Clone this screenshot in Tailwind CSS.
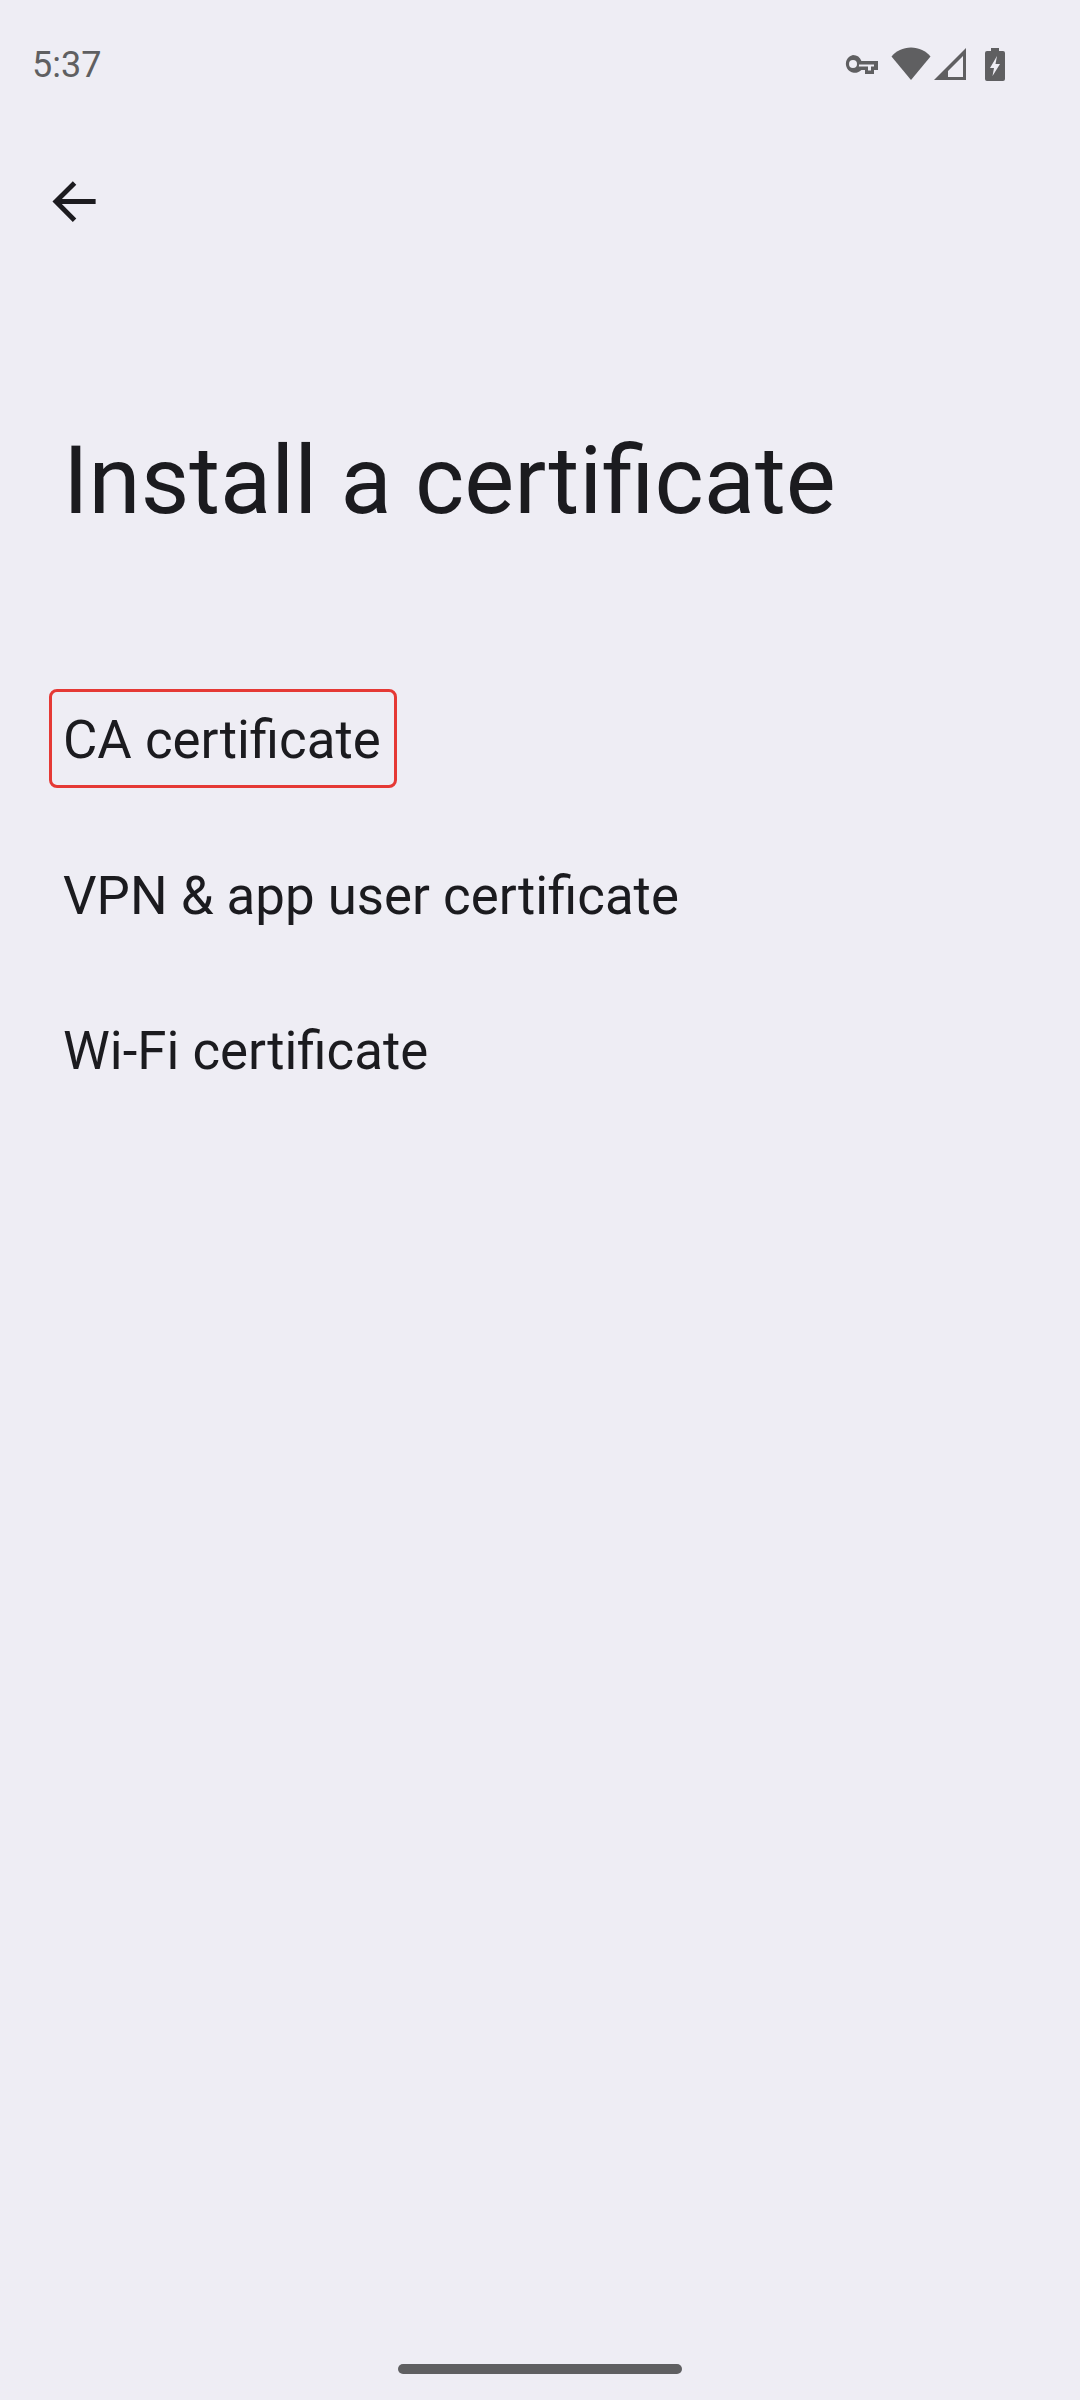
<!DOCTYPE html>
<html lang="en">
<head>
  <meta charset="UTF-8">
  <meta name="viewport" content="width=device-width, initial-scale=1.0">
  <title>Install a certificate</title>
  <script src="https://cdn.jsdelivr.net/npm/@tailwindcss/browser@4"></script>
</head>
<body class="bg-[#eeedf4] font-['Roboto',sans-serif]">
  <div class="flex flex-col w-[1080px] h-[2400px] overflow-hidden">
    <!-- Status bar -->
    <div class="flex items-center justify-between h-[64px] mt-[32px] pl-[32px] pr-[75px] text-[#5f5f61]">
      <span class="pt-[2px] text-[36px] leading-none">5:37</span>
      <div class="flex items-center">
        <svg class="w-[34px] h-[22px] fill-current" viewBox="0 0 34 22">
          <path fill-rule="evenodd" d="M9 2a9 9 0 0 1 8.400 6H34v9h-4v4h-9v-4h-3.600A9 9 0 1 1 9 2zm0 5a4 4 0 1 0 0 8 4 4 0 0 0 0-8zm6 4.500a6 6 0 0 1-.2 2H24v4h3v-4h3v-2z"/>
        </svg>
        <svg class="w-[40px] h-[34px] ml-[13px] fill-current" viewBox="0 0 40 34">
          <path d="M20 33 .5 9.500C5 4 12 .500 20 .500S35 4 39.500 9.500z"/>
        </svg>
        <svg class="w-[34px] h-[34px] ml-[2px] fill-current" viewBox="0 0 34 34">
          <path fill-rule="evenodd" d="M33 1v32H1zM30 9 15 24v6h15z"/>
        </svg>
        <svg class="w-[20px] h-[34px] ml-[18px] fill-current" viewBox="0 0 20 34">
          <path fill-rule="evenodd" d="M6 1h8v3h4a2 2 0 0 1 2 2v26a2 2 0 0 1-2 2H2a2 2 0 0 1-2-2V6a2 2 0 0 1 2-2h4zM12 9 5 21h4l-1.500 8L15 17h-4.500z"/>
        </svg>
      </div>
    </div>

    <!-- Back button -->
    <div class="flex items-center h-[48px] mt-[82px] pl-[52px]">
      <svg class="w-[44px] h-[44px]" viewBox="0 0 44 44" fill="none" stroke="#1c1b1f" stroke-width="5">
        <path d="M44 22H3M22.500 3 3.500 22l19 19" transform="translate(0.500 0) scale(0.98)"/>
      </svg>
    </div>

    <!-- Title -->
    <h1 class="mt-[199px] pl-[63px] text-[94.200px] leading-[112px] font-normal text-[#1b1b1f]">Install a certificate</h1>

    <!-- Options -->
    <div class="flex flex-col mt-[152px] pl-[49px] text-[52.800px] leading-[62px] text-[#1b1b1f]">
      <div class="flex items-center self-start h-[99px] pt-[3px] pl-[11px] pr-[13px] border-[3px] border-[#e53935] rounded-[8px]">CA certificate</div>
      <div class="flex items-center h-[98px] mt-[57px] pt-[3px] pl-[14px]">VPN &amp; app user certificate</div>
      <div class="flex items-center h-[98px] mt-[57px] pt-[3px] pl-[14px]">Wi-Fi certificate</div>
    </div>

    <!-- Gesture bar -->
    <div class="w-[284px] h-[10px] mx-auto mt-auto mb-[26px] rounded-full bg-[#5f5f61]"></div>
  </div>
</body>
</html>
